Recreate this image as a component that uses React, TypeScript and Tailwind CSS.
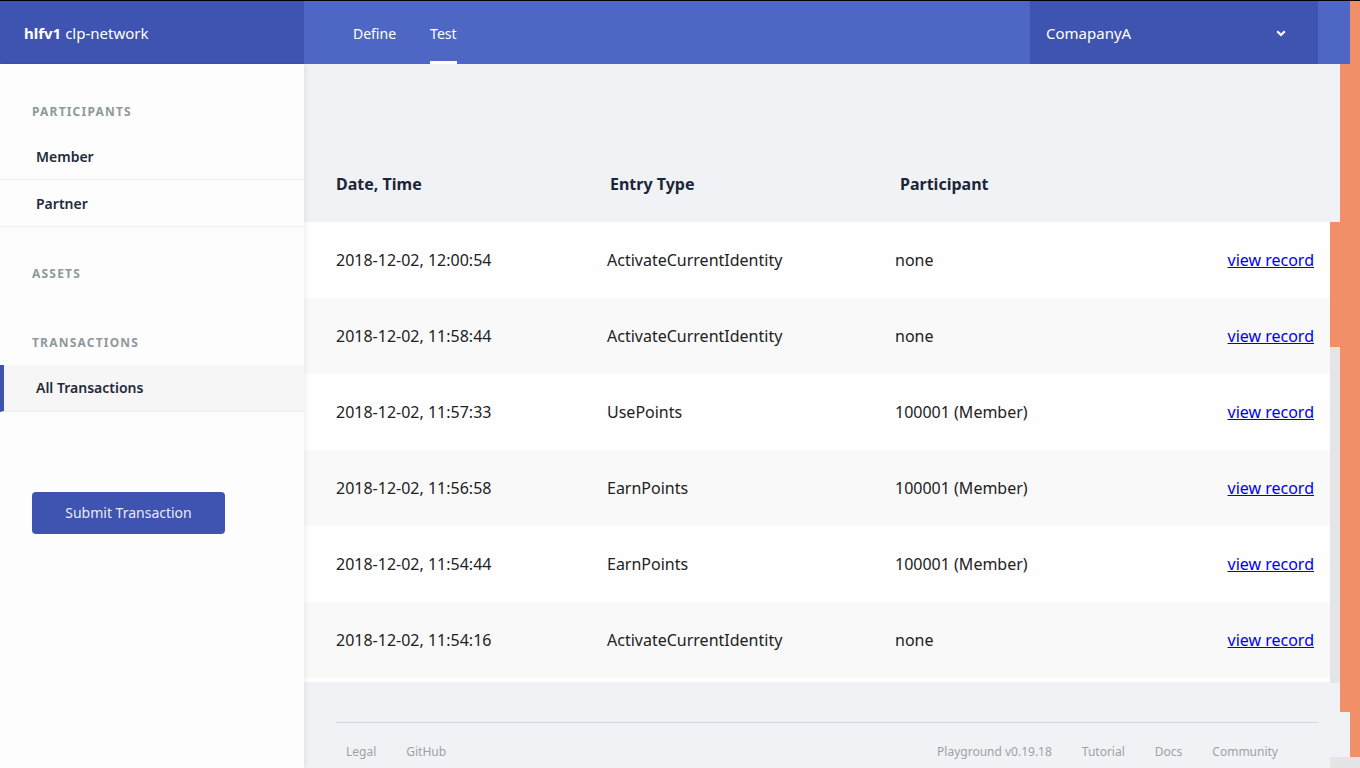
const rows = [
  { time: "2018-12-02, 12:00:54", type: "ActivateCurrentIdentity", who: "none" },
  { time: "2018-12-02, 11:58:44", type: "ActivateCurrentIdentity", who: "none" },
  { time: "2018-12-02, 11:57:33", type: "UsePoints", who: "100001 (Member)" },
  { time: "2018-12-02, 11:56:58", type: "EarnPoints", who: "100001 (Member)" },
  { time: "2018-12-02, 11:54:44", type: "EarnPoints", who: "100001 (Member)" },
  { time: "2018-12-02, 11:54:16", type: "ActivateCurrentIdentity", who: "none" },
];

function Chevron() {
  return (
    <svg width="10" height="7" viewBox="0 0 10 7" className="text-white">
      <path d="M1.2 1.2 L5 5 L8.8 1.2" stroke="currentColor" strokeWidth="2.2" fill="none" />
    </svg>
  );
}

export default function App() {
  return (
    <div className="h-[768px] w-[1360px] overflow-hidden bg-[#f1f2f6] font-['Noto_Sans',sans-serif]">
      {/* Top bar */}
      <header className="flex h-16 border-t border-black bg-[#4f67c4]">
        <div className="flex w-[304px] items-center bg-[#3f53b0] pl-6 pt-[2px] text-[15px] text-white">
          <span className="font-bold">hlfv1</span>
          <span className="ml-1">clp-network</span>
        </div>
        <nav className="flex flex-1 gap-[34px] pl-[49px] text-sm text-white">
          <a className="flex items-center pt-[2px]">Define</a>
          <a className="flex items-center border-b-[3px] border-white pt-[5px]">Test</a>
        </nav>
        <div className="flex w-[288px] items-center justify-between bg-[#3f53b0] pl-4 pr-8 pt-[2px] text-[15px] text-white">
          <span>ComapanyA</span>
          <Chevron />
        </div>
        <div className="w-8" />
        <div className="w-[10px] bg-[#f08f68]" />
      </header>

      <div className="flex h-[704px]">
        {/* Sidebar */}
        <aside className="relative z-10 flex w-[304px] flex-col bg-[#fdfdfd] shadow-[2px_0_4px_rgba(0,0,0,0.06)]">
          <h3 className="pl-8 pt-[40px] text-xs font-bold tracking-[0.1em] text-[#8d999c]">PARTICIPANTS</h3>
          <div className="mt-[13px] border-b border-[#efefef] pb-[12px] pl-9 pt-[14px] text-sm font-semibold text-[#1f2a3c]">Member</div>
          <div className="border-b border-[#efefef] pb-[12px] pl-9 pt-[14px] text-sm font-semibold text-[#1f2a3c]">Partner</div>
          <h3 className="pl-8 pt-[39px] text-xs font-bold tracking-[0.1em] text-[#8d999c]">ASSETS</h3>
          <h3 className="pl-8 pt-[53px] text-xs font-bold tracking-[0.1em] text-[#8d999c]">TRANSACTIONS</h3>
          <div className="mt-[14px] border-b border-l-4 border-[#efefef] border-l-[#3f53b0] bg-[#f6f6f7] py-[13px] pl-8 text-sm font-semibold text-[#1f2a3c]">
            All Transactions
          </div>
          <div className="pl-8 pt-[80px]">
            <button className="h-[42px] w-[193px] rounded-[4px] bg-[#3f53b0] text-sm text-[#e8ebf7]">Submit Transaction</button>
          </div>
        </aside>

        {/* Main */}
        <main className="flex w-[1026px] flex-col">
          <div className="flex h-[158px] items-end">
            <div className="flex h-[72px] w-full items-center pb-[5px] text-base font-bold text-[#1b2636]">
              <span className="w-[306px] pl-8">Date, Time</span>
              <span className="w-[290px]">Entry Type</span>
              <span>Participant</span>
            </div>
          </div>
          {rows.map((r, i) => (
            <div
              key={i}
              className={`flex h-[76px] items-center text-base text-[#222] ${i % 2 === 0 ? "bg-[#fefefe]" : "bg-[#f9f9f9]"}`}
            >
              <span className="w-[303px] pl-8">{r.time}</span>
              <span className="w-[288px]">{r.type}</span>
              <span className="flex-1">{r.who}</span>
              <a className="pr-4 text-[#0000ee] underline">view record</a>
            </div>
          ))}
          <div className="h-1 bg-[#fefefe]" />
          <footer className="mx-8 mr-3 mt-10 flex justify-between border-t border-[#cfd8dc] px-[10px] pt-[21px] text-xs text-[#9aa3a6]">
            <div className="flex gap-[30px]">
              <span>Legal</span>
              <span>GitHub</span>
            </div>
            <div className="flex gap-[30px] pr-[30px]">
              <span>Playground v0.19.18</span>
              <span>Tutorial</span>
              <span>Docs</span>
              <span>Community</span>
            </div>
          </footer>
        </main>

        {/* Right edge strip */}
        <div className="flex w-[30px] flex-col">
          <div className="flex h-[158px]">
            <div className="w-[10px] bg-[#f1f2f6]" />
            <div className="flex-1 bg-[#f08f68]" />
          </div>
          <div className="h-[125px] bg-[#f08f68]" />
          <div className="flex h-[336px]">
            <div className="w-[10px] bg-[#e5e5e5]" />
            <div className="flex-1 bg-[#f08f68]" />
          </div>
          <div className="flex h-[29px]">
            <div className="w-[10px] bg-[#f1f2f6]" />
            <div className="flex-1 bg-[#f08f68]" />
          </div>
          <div className="flex h-[45px]">
            <div className="w-5 bg-[#f1f2f6]" />
            <div className="flex-1 bg-[#f08f68]" />
          </div>
          <div className="flex-1 bg-[#e5e5e5]" />
        </div>
      </div>
    </div>
  );
}
